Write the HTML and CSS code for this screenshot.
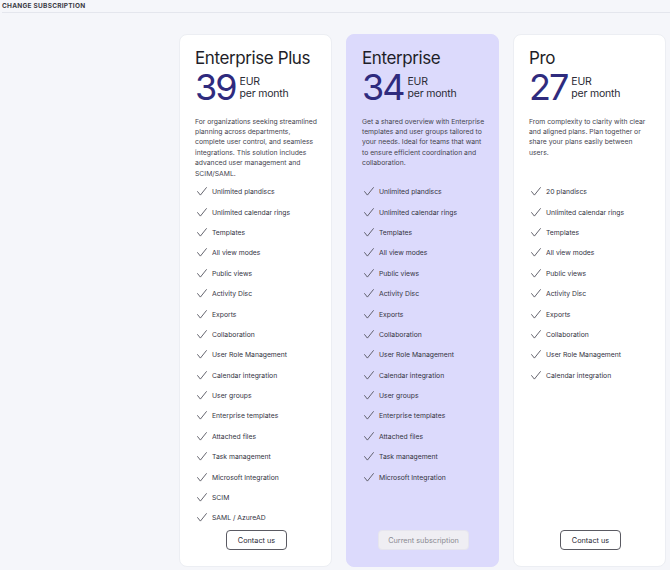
FILE: index.html
```html
<!DOCTYPE html>
<html lang="en">
<head>
<meta charset="utf-8">
<title>Change subscription</title>
<link rel="stylesheet" href="styles.css">
</head>
<body>
<header class="page-head">
  <h1 class="page-title">CHANGE SUBSCRIPTION</h1>
</header>

<svg width="0" height="0" class="defs" aria-hidden="true">
  <symbol id="check" viewBox="0 0 10 9">
    <path d="M0.6 4.6 L3.4 8.1 L9.4 0.6" fill="none" stroke="#55555f" stroke-width="0.9" stroke-linecap="round" stroke-linejoin="round"/>
  </symbol>
</svg>

<main class="plans">
  <section class="plan">
    <h2 class="plan-name">Enterprise Plus</h2>
    <div class="price">
      <span class="amount">39</span>
      <span class="unit">EUR<br>per month</span>
    </div>
    <p class="plan-desc">For organizations seeking streamlined planning across departments, complete user control, and seamless integrations. This solution includes advanced user management and SCIM/SAML.</p>
    <ul class="features">
      <li><svg class="tick"><use href="#check"/></svg>Unlimited plandiscs</li>
      <li><svg class="tick"><use href="#check"/></svg>Unlimited calendar rings</li>
      <li><svg class="tick"><use href="#check"/></svg>Templates</li>
      <li><svg class="tick"><use href="#check"/></svg>All view modes</li>
      <li><svg class="tick"><use href="#check"/></svg>Public views</li>
      <li><svg class="tick"><use href="#check"/></svg>Activity Disc</li>
      <li><svg class="tick"><use href="#check"/></svg>Exports</li>
      <li><svg class="tick"><use href="#check"/></svg>Collaboration</li>
      <li><svg class="tick"><use href="#check"/></svg>User Role Management</li>
      <li><svg class="tick"><use href="#check"/></svg>Calendar integration</li>
      <li><svg class="tick"><use href="#check"/></svg>User groups</li>
      <li><svg class="tick"><use href="#check"/></svg>Enterprise templates</li>
      <li><svg class="tick"><use href="#check"/></svg>Attached files</li>
      <li><svg class="tick"><use href="#check"/></svg>Task management</li>
      <li><svg class="tick"><use href="#check"/></svg>Microsoft Integration</li>
      <li><svg class="tick"><use href="#check"/></svg>SCIM</li>
      <li><svg class="tick"><use href="#check"/></svg>SAML / AzureAD</li>
    </ul>
    <button class="btn btn-contact" type="button">Contact us</button>
  </section>

  <section class="plan plan-current">
    <h2 class="plan-name">Enterprise</h2>
    <div class="price">
      <span class="amount">34</span>
      <span class="unit">EUR<br>per month</span>
    </div>
    <p class="plan-desc">Get a shared overview with Enterprise templates and user groups tailored to your needs. Ideal for teams that want to ensure efficient coordination and collaboration.</p>
    <ul class="features">
      <li><svg class="tick"><use href="#check"/></svg>Unlimited plandiscs</li>
      <li><svg class="tick"><use href="#check"/></svg>Unlimited calendar rings</li>
      <li><svg class="tick"><use href="#check"/></svg>Templates</li>
      <li><svg class="tick"><use href="#check"/></svg>All view modes</li>
      <li><svg class="tick"><use href="#check"/></svg>Public views</li>
      <li><svg class="tick"><use href="#check"/></svg>Activity Disc</li>
      <li><svg class="tick"><use href="#check"/></svg>Exports</li>
      <li><svg class="tick"><use href="#check"/></svg>Collaboration</li>
      <li><svg class="tick"><use href="#check"/></svg>User Role Management</li>
      <li><svg class="tick"><use href="#check"/></svg>Calendar integration</li>
      <li><svg class="tick"><use href="#check"/></svg>User groups</li>
      <li><svg class="tick"><use href="#check"/></svg>Enterprise templates</li>
      <li><svg class="tick"><use href="#check"/></svg>Attached files</li>
      <li><svg class="tick"><use href="#check"/></svg>Task management</li>
      <li><svg class="tick"><use href="#check"/></svg>Microsoft Integration</li>
    </ul>
    <button class="btn btn-current" type="button" disabled>Current subscription</button>
  </section>

  <section class="plan">
    <h2 class="plan-name">Pro</h2>
    <div class="price">
      <span class="amount">27</span>
      <span class="unit">EUR<br>per month</span>
    </div>
    <p class="plan-desc">From complexity to clarity with clear and aligned plans. Plan together or share your plans easily between users.</p>
    <ul class="features">
      <li><svg class="tick"><use href="#check"/></svg>20 plandiscs</li>
      <li><svg class="tick"><use href="#check"/></svg>Unlimited calendar rings</li>
      <li><svg class="tick"><use href="#check"/></svg>Templates</li>
      <li><svg class="tick"><use href="#check"/></svg>All view modes</li>
      <li><svg class="tick"><use href="#check"/></svg>Public views</li>
      <li><svg class="tick"><use href="#check"/></svg>Activity Disc</li>
      <li><svg class="tick"><use href="#check"/></svg>Exports</li>
      <li><svg class="tick"><use href="#check"/></svg>Collaboration</li>
      <li><svg class="tick"><use href="#check"/></svg>User Role Management</li>
      <li><svg class="tick"><use href="#check"/></svg>Calendar integration</li>
    </ul>
    <button class="btn btn-contact" type="button">Contact us</button>
  </section>
</main>
</body>
</html>
```

FILE: styles.css
```css
* {
  box-sizing: border-box;
}

html, body {
  margin: 0;
  padding: 0;
}

body {
  background: #f5f6fa;
  font-family: Inter, "Noto Sans", "Liberation Sans", sans-serif;
  color: #2b2b35;
  width: 670px;
  height: 570px;
  overflow: hidden;
}

.defs {
  position: absolute;
  width: 0;
  height: 0;
}

/* top bar with section title and divider */
.page-head {
  margin-left: 2px;
  padding: 2px 0 0;
  height: 13px;
  border-bottom: 1px solid #e4e6ed;
}

.page-title {
  margin: 0;
  font-size: 6.5px;
  line-height: 8px;
  font-weight: 700;
  letter-spacing: 0.25px;
  color: #3a3a44;
}

/* plan cards */
.plans {
  display: grid;
  grid-template-columns: repeat(3, 153px);
  column-gap: 14px;
  justify-content: end;
  padding: 21px 4px 0 0;
}

.plan {
  display: flex;
  flex-direction: column;
  height: 533px;
  background: #ffffff;
  border: 1px solid #eceef3;
  border-radius: 8px;
  padding: 13px 13px 16px 15px;
}

.plan-current {
  background: #dcdafc;
  border-color: #dcdafc;
}

.plan-name {
  margin: 0;
  font-size: 17px;
  line-height: 21px;
  font-weight: 400;
  color: #1e1e28;
  letter-spacing: -0.4px;
  white-space: nowrap;
}

.price {
  display: flex;
  align-items: flex-start;
  gap: 4px;
  height: 34px;
  margin-top: 1px;
}

.amount {
  font-size: 36px;
  line-height: 34px;
  font-weight: 400;
  letter-spacing: -2px;
  color: #2f2b7e;
}

.unit {
  margin-top: 6px;
  font-size: 10.5px;
  line-height: 11.5px;
  letter-spacing: -0.2px;
  color: #2b2b35;
}

.plan-desc {
  margin: 12.5px 0 0;
  height: 65px;
  font-size: 6.8px;
  line-height: 10.4px;
  color: #45454f;
}

.features {
  list-style: none;
  margin: 0;
  padding: 0;
}

.features li {
  display: flex;
  align-items: center;
  height: 20.4px;
  font-size: 6.8px;
  color: #34343f;
}

.tick {
  width: 10px;
  height: 9px;
  margin: 0 5px 0 2px;
  flex: none;
}

.btn {
  margin: auto auto 0;
  height: 20px;
  border-radius: 4px;
  font-family: inherit;
  font-size: 7.3px;
  padding: 0;
}

.btn-contact {
  width: 61px;
  background: #ffffff;
  border: 1px solid #5a5a62;
  color: #2b2b35;
}

.btn-current {
  width: 91px;
  background: #efeef3;
  border: 1px solid #e6e5ee;
  color: #8a8a92;
}
```
